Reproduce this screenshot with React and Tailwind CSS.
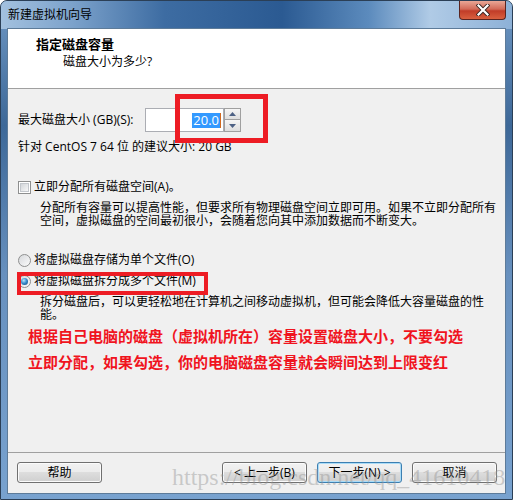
import React from 'react';

const Checkbox = () => (
  <span className="flex h-[13px] w-[13px] shrink-0 items-center justify-center border border-[#8e8f8f] bg-white">
    <span className="h-[9px] w-[9px] border border-[#c3c7cc] bg-[linear-gradient(135deg,#d3d6da,#f7f7f7)]" />
  </span>
);

const Radio = ({ checked }) => (
  <span className="flex h-[13px] w-[13px] shrink-0 items-center justify-center rounded-full border border-[#8e8f8f] bg-[linear-gradient(135deg,#d6d8db,#fbfbfb)]">
    {checked && (
      <span className="h-[7px] w-[7px] rounded-full bg-[radial-gradient(circle_at_40%_35%,#bfe8fb_0%,#3a8fd0_45%,#0e3f70_100%)]" />
    )}
  </span>
);

const WinButton = ({ children, isDefault }) => (
  <button
    className={
      isDefault
        ? 'flex h-[21px] w-[85px] items-center justify-center rounded-[3px] border border-[#3c7fb1] bg-[linear-gradient(180deg,#f2f2f2_0%,#ebebeb_50%,#dddddd_50%,#cfcfcf_100%)] text-[12px] leading-[14px] text-black shadow-[inset_0_0_0_1px_#a9dcf8]'
        : 'flex h-[21px] w-[85px] items-center justify-center rounded-[3px] border border-[#707070] bg-[linear-gradient(180deg,#f2f2f2_0%,#ebebeb_50%,#dddddd_50%,#cfcfcf_100%)] text-[12px] leading-[14px] text-black shadow-[inset_0_0_0_1px_#fbfbfb]'
    }
  >
    {children}
  </button>
);

export default function App() {
  return (
    <div className="relative flex h-[500px] w-[513px] flex-col overflow-hidden rounded-t-[7px] border border-[#2b3f56] bg-[linear-gradient(180deg,#6f98c4_0%,#3d6898_25%,#6790be_55%,#78a2cf_100%)] font-['Open_Sans','Noto_Sans_CJK_SC',sans-serif] text-black">
      {/* Title bar */}
      <div className="flex h-[28px] shrink-0 items-start justify-between bg-[linear-gradient(90deg,#a3c1df_0%,#7ca2cb_14%,#3d6ca2_32%,#2b5a92_55%,#5c8bbd_72%,#b0cbe6_84%,#8db1d7_100%)]">
        <span className="pl-[7px] pt-[6px] text-[12px] leading-[16px] text-black">新建虚拟机向导</span>
        <span className="mr-[6px] flex h-[19px] w-[47px] items-center justify-center rounded-b-[4px] border border-t-0 border-[#5a2420] bg-[linear-gradient(180deg,#e9a796_0%,#d26a58_45%,#c13c28_55%,#d9603f_100%)]">
          <svg width="14" height="12" viewBox="0 0 14 12">
            <path d="M2.5 1.5 L11.5 10.5 M11.5 1.5 L2.5 10.5" stroke="#3a2522" strokeWidth="4" strokeLinecap="square" />
            <path d="M2.5 1.5 L11.5 10.5 M11.5 1.5 L2.5 10.5" stroke="#ffffff" strokeWidth="2.2" strokeLinecap="square" />
          </svg>
        </span>
      </div>

      {/* Client area */}
      <div className="mx-[7px] mb-[6px] flex flex-1 flex-col bg-[#f0f0f0] shadow-[0_0_0_1px_#5d7b99]">
        {/* Header */}
        <div className="h-[60px] shrink-0 border-b border-[#a0a0a0] bg-white pl-[28px] pt-[6px]">
          <div className="text-[13px] font-bold leading-[18px]">指定磁盘容量</div>
          <div className="pl-[27px] text-[12px] leading-[18px]">磁盘大小为多少?</div>
        </div>

        {/* Body */}
        <div className="flex flex-1 flex-col pl-[10px] text-[12px]">
          <div className="mt-[19px] flex h-[24px] items-center">
            <span className="w-[127px] leading-[16px]">最大磁盘大小 (GB)(S):</span>
            <div className="flex h-[24px] w-[79px] items-center justify-end border border-[#abadb3] bg-white pr-[2px]">
              <span className="bg-[#3399ff] px-px text-[13px] leading-[15px] text-white">20.0</span>
              <span className="h-[15px] w-px bg-[#d2691e]" />
            </div>
            <div className="flex h-[24px] w-[17px] flex-col">
              <span className="flex h-[12px] items-center justify-center border border-[#a0a0a0] bg-[linear-gradient(180deg,#f6f6f6,#dedede)]">
                <svg width="7" height="4" viewBox="0 0 7 4">
                  <path d="M0 4 L3.5 0 L7 4 Z" fill="#4d6185" />
                </svg>
              </span>
              <span className="flex h-[12px] items-center justify-center border border-t-0 border-[#a0a0a0] bg-[linear-gradient(180deg,#f6f6f6,#dedede)]">
                <svg width="7" height="4" viewBox="0 0 7 4">
                  <path d="M0 0 L7 0 L3.5 4 Z" fill="#4d6185" />
                </svg>
              </span>
            </div>
          </div>
          <div className="mt-[7px] leading-[16px]">针对 CentOS 7 64 位 的建议大小: 20 GB</div>

          <div className="mt-[24px] flex h-[16px] items-center gap-[3px]">
            <Checkbox />
            <span className="leading-[16px]">立即分配所有磁盘空间(A)。</span>
          </div>
          <div className="ml-[22px] mt-[6px] whitespace-nowrap leading-[13px]">
            <div>分配所有容量可以提高性能，但要求所有物理磁盘空间立即可用。如果不立即分配所有</div>
            <div>空间，虚拟磁盘的空间最初很小，会随着您向其中添加数据而不断变大。</div>
          </div>

          <div className="mt-[25px] flex h-[16px] items-center gap-[3px]">
            <Radio />
            <span className="leading-[16px]">将虚拟磁盘存储为单个文件(O)</span>
          </div>
          <div className="mt-[5px] flex h-[16px] items-center gap-[3px]">
            <Radio checked />
            <span className="leading-[16px]">将虚拟磁盘拆分成多个文件(M)</span>
          </div>
          <div className="ml-[22px] mt-[6px] whitespace-nowrap leading-[13px]">
            <div>拆分磁盘后，可以更轻松地在计算机之间移动虚拟机，但可能会降低大容量磁盘的性</div>
            <div>能。</div>
          </div>

          <div className="ml-[10px] mt-[2px] whitespace-nowrap font-['Noto_Sans_CJK_SC',sans-serif] text-[15px] font-bold leading-[26px] text-[#f0141e]">
            <div>根据自己电脑的磁盘（虚拟机所在）容量设置磁盘大小，不要勾选</div>
            <div>立即分配，如果勾选，你的电脑磁盘容量就会瞬间达到上限变红</div>
          </div>
        </div>

        {/* Footer */}
        <div className="flex h-[41px] shrink-0 items-start border-t border-[#a0a0a0] pl-[9px] pr-[8px] pt-[9px]">
          <WinButton>帮助</WinButton>
          <div className="ml-auto flex gap-[10px]">
            <WinButton>&lt; 上一步(B)</WinButton>
            <WinButton isDefault>下一步(N) &gt;</WinButton>
            <WinButton>取消</WinButton>
          </div>
        </div>
      </div>

      {/* Annotations */}
      <div className="pointer-events-none absolute left-[174px] top-[93px] h-[49px] w-[93px] border-[5px] border-[#ed1c24]" />
      <div className="pointer-events-none absolute left-[16px] top-[271px] h-[23px] w-[191px] border-[4px] border-[#ed1c24]" />
      <div className="pointer-events-none absolute left-[171px] top-[464px] whitespace-nowrap font-['Liberation_Serif',serif] text-[24px] leading-[24px] text-[rgba(150,150,150,0.45)]">
        https://blog.csdn.net/qq_41610418
      </div>
    </div>
  );
}
